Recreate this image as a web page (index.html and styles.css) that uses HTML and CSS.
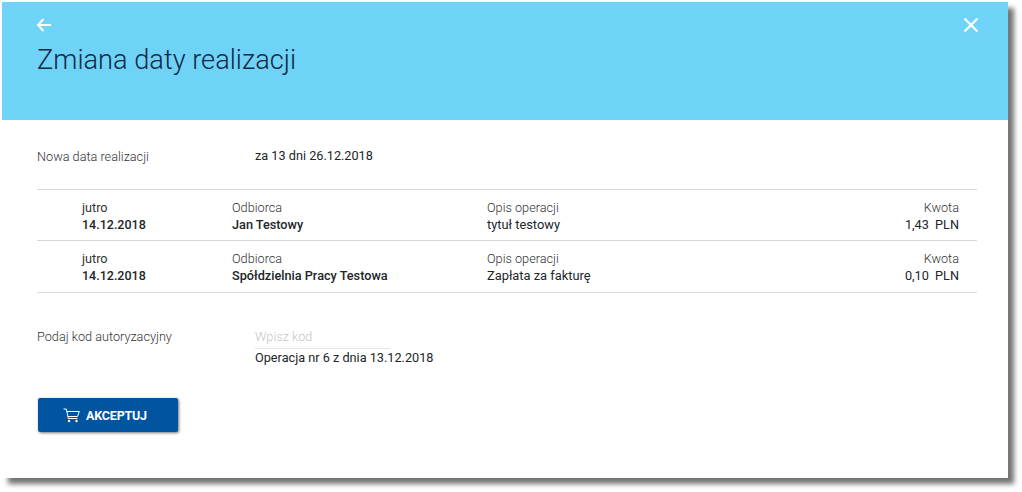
FILE: index.html
```html
<!DOCTYPE html>
<html lang="pl">
<head>
    <meta charset="utf-8">
    <title>Zmiana daty realizacji</title>
    <link rel="stylesheet" href="styles.css">
</head>
<body>

<div class="panel">
    <!-- naglowek -->
    <div class="header">
        <div class="header-icons">
            <svg class="icon-back" width="16" height="14" viewBox="0 0 16 14"><path d="M15 7H2M7.500 1 2 7l5.500 6" fill="none" stroke="#fff" stroke-width="2"/></svg>
            <svg class="icon-close" width="16" height="16" viewBox="0 0 16 16"><path d="M1.500 1.500l13 13M14.500 1.500l-13 13" fill="none" stroke="#fff" stroke-width="2.200"/></svg>
        </div>
        <h1 class="title">Zmiana daty realizacji</h1>
    </div>

    <div class="content">
        <div class="field field-date">
            <div class="field-label">Nowa data realizacji</div>
            <div class="field-value">za 13 dni 26.12.2018</div>
        </div>

        <!-- lista operacji -->
        <div class="list">
            <div class="row">
                <div class="col col-date"><span class="small dark">jutro</span><span class="strong">14.12.2018</span></div>
                <div class="col col-name"><span class="small">Odbiorca</span><span class="strong">Jan Testowy</span></div>
                <div class="col col-desc"><span class="small">Opis operacji</span><span class="medium">tytuł testowy</span></div>
                <div class="col col-amount"><span class="small">Kwota</span><span class="medium">1,43&nbsp; PLN</span></div>
            </div>
            <div class="row">
                <div class="col col-date"><span class="small dark">jutro</span><span class="strong">14.12.2018</span></div>
                <div class="col col-name"><span class="small">Odbiorca</span><span class="strong">Spółdzielnia Pracy Testowa</span></div>
                <div class="col col-desc"><span class="small">Opis operacji</span><span class="medium">Zapłata za fakturę</span></div>
                <div class="col col-amount"><span class="small">Kwota</span><span class="medium">0,10&nbsp; PLN</span></div>
            </div>
        </div>

        <div class="field field-code">
            <div class="field-label">Podaj kod autoryzacyjny</div>
            <div class="code-box">
                <div class="code-input">Wpisz kod</div>
                <div class="field-value">Operacja nr 6 z dnia 13.12.2018</div>
            </div>
        </div>

        <button class="btn-accept">
            <svg width="17" height="15" viewBox="0 0 17 15"><path d="M.5 1h2.800l2 9.500h9.200M3.800 3.500h12.500l-1.800 5H4.900" fill="none" stroke="#fff" stroke-width="1"/><circle cx="6" cy="13" r="1.200" fill="#fff"/><circle cx="13.500" cy="13" r="1.200" fill="#fff"/></svg>
            AKCEPTUJ
        </button>
    </div>
</div>

</body>
</html>
```

FILE: styles.css
```css
* {
    box-sizing: border-box;
}

html, body {
    height: 100%;
}

body {
    margin: 0;
    padding: 2px 14px 14px 2px;
    background: #fff;
    font-family: "Roboto", sans-serif;
    color: #212529;
}

.panel {
    height: 476px;
    background: #fff;
    box-shadow: 6px 6px 5px rgba(0, 0, 0, 0.55);
}

/* naglowek */
.header {
    height: 118px;
    padding: 15px 29px 0 35px;
    background: #6fd3f7;
}

.header-icons {
    display: flex;
    justify-content: space-between;
    align-items: center;
    height: 16px;
}

.icon-back {
    margin-left: -1px;
}

.title {
    margin: 10px 0 0;
    font-size: 27.200px;
    line-height: 34px;
    font-weight: 300;
    color: #0f2a47;
}

/* tresc */
.content {
    padding: 0 31px 0 35px;
}

.field {
    display: flex;
    font-size: 12.700px;
}

.field-date {
    padding-top: 28px;
    height: 69px;
}

.field-label {
    width: 218px;
    font-weight: 300;
    line-height: 16px;
    color: #333;
    padding-top: 1px;
}

.field-value {
    line-height: 16px;
    color: #212529;
}

.list {
    border-top: 1px solid #d9d9d9;
}

.row {
    display: flex;
    height: 51px;
    padding-top: 9px;
    border-bottom: 1px solid #d9d9d9;
}

.row:last-child {
    height: 52px;
}

.col span {
    display: block;
    font-size: 12.700px;
    line-height: 17px;
}

.col-date {
    width: 195px;
    padding-left: 45px;
}

.col-date .strong {
    font-size: 12.500px;
}

.col-name {
    width: 255px;
}

.col-desc {
    flex: 1;
}

.col-desc .medium {
    font-size: 12.850px;
}

.col-amount {
    padding-right: 18px;
    text-align: right;
}

.small {
    font-weight: 300;
    color: #333;
}

.small.dark {
    font-weight: 400;
}

.strong {
    font-weight: 500;
}

.medium {
    font-weight: 400;
}

.field-code {
    padding-top: 35px;
}

.code-box {
    width: 180px;
}

.code-input {
    width: 135px;
    height: 21px;
    line-height: 17px;
    color: #c4c4c4;
    font-weight: 300;
    border-bottom: 1px solid #e4e4e4;
}

.code-box .field-value {
    white-space: nowrap;
    line-height: 17px;
}

.btn-accept {
    display: flex;
    align-items: center;
    justify-content: center;
    gap: 6px;
    width: 140px;
    height: 34px;
    margin: 32px 0 0 1px;
    padding: 0 6px 0 0;
    border: 0;
    border-radius: 2px;
    background: #0054a0;
    box-shadow: 1px 1px 3px rgba(0, 0, 0, 0.55);
    color: #fff;
    font-family: "Roboto", sans-serif;
    font-size: 12.500px;
    font-weight: 700;
    letter-spacing: -0.2px;
}
```
